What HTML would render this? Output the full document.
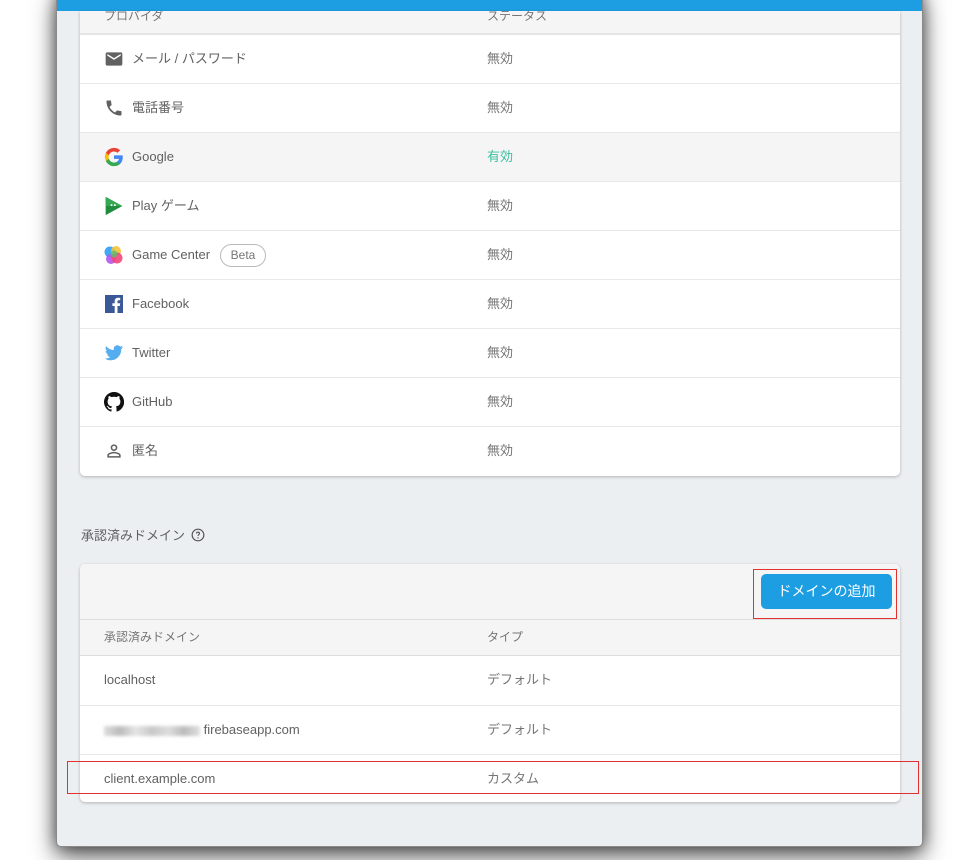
<!DOCTYPE html>
<html><head><meta charset="utf-8"><style>
*{box-sizing:border-box;margin:0;padding:0}
body{width:979px;height:860px;background:#fff;position:relative;overflow:hidden;font-family:"Liberation Sans","Noto Sans CJK JP",sans-serif;font-size:13px;color:#5f6368}
.win{position:absolute;left:56px;top:-10px;width:867px;height:857px;background:#eceff1;border:1px solid #8a8a8a;border-radius:0 0 5px 5px;overflow:hidden;box-shadow:0 10px 25px rgba(0,0,0,.6),0 0 14px rgba(0,0,0,.45)}
.bar{position:absolute;left:0;top:0;width:867px;height:20px;background:#1e9ee2}
.inner{position:absolute;left:0;top:20px;width:867px;height:837px}
.card{position:absolute;left:23px;width:820px;background:#fff;border-radius:0 0 5px 5px;box-shadow:0 1px 3px rgba(0,0,0,.25)}
.row{position:relative;height:49px;border-top:1px solid #e8e8e8}
.row .n,.row .s{position:absolute;top:0;height:48px;line-height:48px;white-space:nowrap}
.row .n{left:52px;color:#616161}
.row .s{left:407px;color:#757575}
.row .ic{position:absolute;left:24px;top:14px;width:20px;height:20px}
.hd{background:#f5f5f5;color:#757575;font-size:12px}
.beta{display:inline-block;border:1px solid #bbb;border-radius:12px;padding:0 10px;height:23px;line-height:21px;font-size:12px;color:#757575;margin-left:6px;vertical-align:middle}
.redbox{position:absolute;border:1.5px solid #e53030}
</style></head><body>
<div class="win">
<div class="bar"></div>
<div class="inner">
<div class="card" style="top:0;height:465px">
  <div class="hd" style="height:24px;position:relative;border-bottom:2px solid #e4e4e4;overflow:hidden">
    <span style="position:absolute;left:24px;top:-10px;line-height:30px">プロバイダ</span>
    <span style="position:absolute;left:407px;top:-10px;line-height:30px">ステータス</span>
  </div>
  <div class="row" style="border-top:none;height:48px">
    <svg class="ic" viewBox="0 0 24 24"><path fill="#616161" d="M20 4H4a2 2 0 00-2 2v12a2 2 0 002 2h16a2 2 0 002-2V6a2 2 0 00-2-2zm0 4l-8 5-8-5V6l8 5 8-5z"/></svg>
    <span class="n">メール / パスワード</span><span class="s">無効</span></div>
  <div class="row">
    <svg class="ic" viewBox="0 0 24 24"><path fill="#616161" d="M6.6 10.8c1.4 2.8 3.8 5.1 6.6 6.6l2.2-2.2c.3-.3.7-.4 1-.2 1.1.4 2.3.6 3.6.6.6 0 1 .4 1 1V20c0 .6-.4 1-1 1C10.6 21 3 13.4 3 4c0-.6.4-1 1-1h3.5c.6 0 1 .4 1 1 0 1.3.2 2.5.6 3.6.1.3 0 .7-.2 1z"/></svg>
    <span class="n">電話番号</span><span class="s">無効</span></div>
  <div class="row" style="background:#f5f5f5">
    <svg class="ic" viewBox="0 0 48 48"><path fill="#4285F4" d="M45 24.5c0-1.6-.1-3.1-.4-4.5H24v8.5h11.8c-.5 2.8-2 5.1-4.3 6.7v5.5h7C42.6 36.9 45 31.2 45 24.5z"/><path fill="#34A853" d="M24 46c5.9 0 10.9-2 14.5-5.3l-7-5.5c-2 1.3-4.5 2.1-7.5 2.1-5.7 0-10.6-3.9-12.3-9.1H4.5v5.6C8.1 41 15.5 46 24 46z"/><path fill="#FBBC05" d="M11.7 28.2c-.4-1.3-.7-2.7-.7-4.2s.3-2.9.7-4.2v-5.6H4.5C3 17.1 2 20.4 2 24s1 6.9 2.5 9.8z"/><path fill="#EA4335" d="M24 10.7c3.2 0 6.1 1.1 8.4 3.3l6.3-6.3C34.9 4.2 29.9 2 24 2 15.5 2 8.1 7 4.5 14.2l7.2 5.6c1.7-5.2 6.6-9.1 12.3-9.1z"/></svg>
    <span class="n">Google</span><span class="s" style="color:#3dbfa0">有効</span></div>
  <div class="row">
    <svg class="ic" viewBox="0 0 24 24"><path fill="#1e8e3e" d="M2 1l20 11L2 23z"/><path fill="#34a853" d="M2 1l20 11H2z"/><circle cx="9" cy="11" r="1.2" fill="#fff"/><circle cx="13" cy="11" r="1.2" fill="#fff"/></svg>
    <span class="n">Play ゲーム</span><span class="s">無効</span></div>
  <div class="row">
    <svg class="ic" viewBox="0 0 20 20"><circle cx="6" cy="7" r="5.5" fill="#3fa7f5"/><circle cx="12" cy="6" r="5" fill="#f4c33a" opacity=".9"/><circle cx="7" cy="14" r="5" fill="#b455f0" opacity=".9"/><circle cx="13" cy="13" r="5.5" fill="#f2467a" opacity=".9"/><circle cx="10" cy="9" r="3.5" fill="#5bc06b" opacity=".8"/></svg>
    <span class="n">Game Center <span class="beta">Beta</span></span><span class="s">無効</span></div>
  <div class="row">
    <svg class="ic" viewBox="0 0 20 20"><rect x="1" y="1" width="18" height="18" fill="#3b5998"/><path fill="#fff" d="M13.5 19v-7h2.3l.4-2.7h-2.7V7.6c0-.8.2-1.3 1.3-1.3h1.4V3.9c-.3 0-1.1-.1-2.1-.1-2 0-3.4 1.2-3.4 3.5v2H8.4V12h2.3v7z"/></svg>
    <span class="n">Facebook</span><span class="s">無効</span></div>
  <div class="row">
    <svg class="ic" viewBox="0 0 24 24"><path fill="#55acee" d="M23 5c-.8.4-1.7.6-2.6.7.9-.6 1.6-1.4 2-2.5-.9.5-1.9.9-2.9 1.1A4.5 4.5 0 0011.8 8.5 12.8 12.8 0 012.5 3.8a4.5 4.5 0 001.4 6 4.5 4.5 0 01-2-.6c0 2.2 1.6 4 3.6 4.4-.7.2-1.4.2-2 .1.6 1.8 2.2 3.1 4.2 3.1A9 9 0 011 18.7 12.8 12.8 0 007.9 20.7c8.3 0 12.8-6.9 12.8-12.8v-.6c.9-.6 1.7-1.4 2.3-2.3z"/></svg>
    <span class="n">Twitter</span><span class="s">無効</span></div>
  <div class="row">
    <svg class="ic" viewBox="0 0 16 16"><path fill="#111" d="M8 0a8 8 0 00-2.5 15.6c.4.1.5-.2.5-.4v-1.4c-2.2.5-2.7-1-2.7-1-.4-.9-.9-1.2-.9-1.2-.7-.5.1-.5.1-.5.8.1 1.2.8 1.2.8.7 1.2 1.9.9 2.3.7.1-.5.3-.9.5-1.1-1.8-.2-3.6-.9-3.6-4 0-.9.3-1.6.8-2.1-.1-.2-.4-1 .1-2.1 0 0 .7-.2 2.2.8a7.5 7.5 0 014 0c1.5-1 2.2-.8 2.2-.8.4 1.1.2 1.9.1 2.1.5.6.8 1.3.8 2.1 0 3.1-1.9 3.8-3.7 4 .3.3.6.8.6 1.5v2.2c0 .2.1.5.6.4A8 8 0 008 0z"/></svg>
    <span class="n">GitHub</span><span class="s">無効</span></div>
  <div class="row">
    <svg class="ic" viewBox="0 0 24 24"><path fill="#616161" d="M12 5.9a2.1 2.1 0 110 4.2 2.1 2.1 0 010-4.2m0 9c3 0 6.1 1.5 6.1 2.1v1.1H5.9V17c0-.6 3.1-2.1 6.1-2.1M12 4a4 4 0 100 8 4 4 0 000-8zm0 9c-2.7 0-8 1.3-8 4v3h16v-3c0-2.7-5.3-4-8-4z"/></svg>
    <span class="n">匿名</span><span class="s">無効</span></div>
</div>

<div style="position:absolute;left:24px;top:515px;line-height:20px;color:#616161;font-size:13px">承認済みドメイン <svg width="14" height="14" viewBox="0 0 24 24" style="vertical-align:-2px;margin-left:2px"><circle cx="12" cy="12" r="10" fill="none" stroke="#555" stroke-width="2"/><path d="M9.5 9.5a2.5 2.5 0 115 0c0 1.8-2.5 2-2.5 4" fill="none" stroke="#555" stroke-width="2"/><circle cx="12" cy="17" r="1.2" fill="#555"/></svg></div>

<div class="card" style="top:553px;height:238px;border-radius:5px">
  <div style="height:56px;background:#f5f5f5;border-radius:5px 5px 0 0;position:relative;border-bottom:1px solid #ddd">
    <div style="position:absolute;right:8px;top:10px;width:131px;height:35px;background:#1e9ee2;border-radius:5px;color:#fff;font-size:14px;text-align:center;line-height:35px">ドメインの追加</div>
  </div>
  <div class="hd" style="height:36px;position:relative;border-bottom:1px solid #ddd">
    <span style="position:absolute;left:24px;top:0;line-height:34px">承認済みドメイン</span>
    <span style="position:absolute;left:407px;top:0;line-height:34px">タイプ</span>
  </div>
  <div class="row" style="border-top:none"><span class="n" style="left:24px">localhost</span><span class="s">デフォルト</span></div>
  <div class="row"><span class="n" style="left:24px"><span style="display:inline-block;width:96px;height:10px;background:linear-gradient(90deg,#ddd,#bbb,#e5e5e5,#c8c8c8,#ddd,#bbb,#e0e0e0);vertical-align:middle;filter:blur(1.5px)"></span> firebaseapp.com</span><span class="s">デフォルト</span></div>
  <div class="row"><span class="n" style="left:24px">client.example.com</span><span class="s">カスタム</span></div>
</div>
</div>
</div>
<div class="redbox" style="left:753px;top:569px;width:144px;height:50px"></div>
<div class="redbox" style="left:67px;top:761px;width:852px;height:33px"></div>
</body></html>
